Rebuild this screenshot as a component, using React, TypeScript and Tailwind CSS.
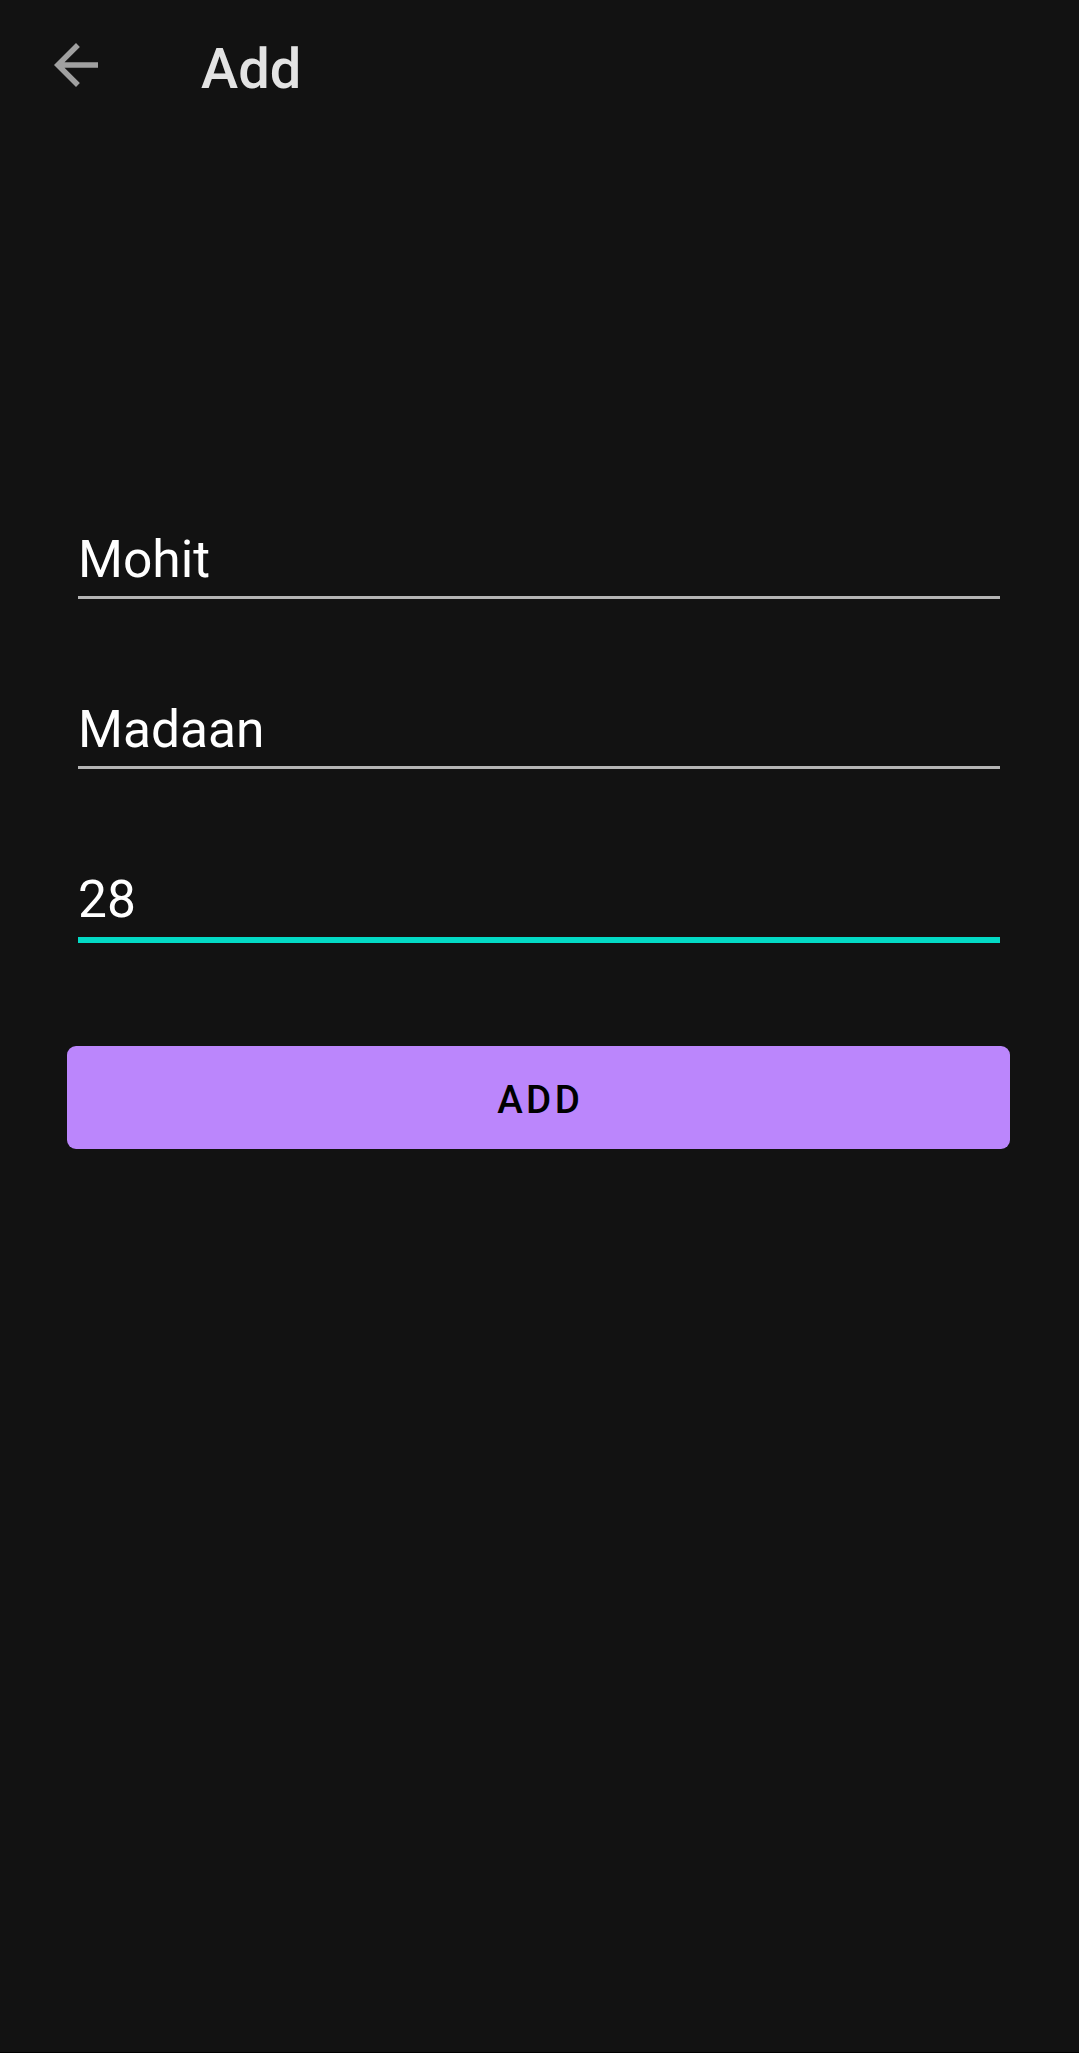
import React from "react";

function Field({ value, focused }: { value: string; focused?: boolean }) {
  return (
    <div className="flex flex-col">
      <div className="h-[62px] leading-[62px] text-[51.5px] text-white whitespace-nowrap">{value}</div>
      {focused ? (
        <div className="mt-[6px] h-[6px] bg-[#03dac5]" />
      ) : (
        <div className="mt-[5px] h-[3px] bg-[#b4b4b4]" />
      )}
    </div>
  );
}

export default function App() {
  return (
    <div
      className="h-[2053px] w-full bg-[#121212] flex flex-col"
      style={{ fontFamily: "Roboto, 'Noto Sans', sans-serif" }}
    >
      <div className="flex items-start pt-[32px] pl-[43px]">
        <div className="w-[66px] h-[66px] flex items-center justify-center">
          <svg width="66" height="66" viewBox="0 0 24 24" fill="#a0a0a0">
            <path d="M20 11H7.83l5.59-5.59L12 4l-8 8 8 8 1.41-1.41L7.83 13H20v-2z" />
          </svg>
        </div>
        <div className="ml-[92px] mt-[4px] h-[66px] leading-[66px] text-[56px] font-medium text-[#e3e3e3]">
          Add
        </div>
      </div>

      <div className="mt-[427px] pl-[78px] pr-[79px] flex flex-col gap-[100px]">
        <Field value="Mohit" />
        <Field value="Madaan" />
        <Field value="28" focused />
      </div>

      <div className="mt-[103px] pl-[67px] pr-[69px]">
        <button className="w-full h-[103px] rounded-[9px] bg-[#bb86fc] flex items-center justify-center text-black text-[38.5px] font-medium tracking-[3.4px] pl-[3.4px] pt-[5px]">
          ADD
        </button>
      </div>

      <div className="mt-auto h-px bg-black" />
    </div>
  );
}
